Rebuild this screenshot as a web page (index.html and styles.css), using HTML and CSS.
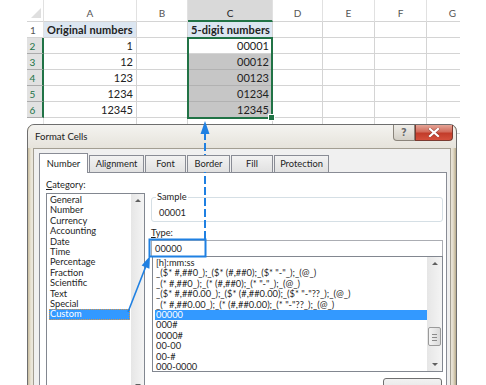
FILE: index.html
```html
<!DOCTYPE html>
<html lang="en">
<head>
    <meta charset="UTF-8">
    <title>Format Cells - leading zeros</title>
    <link rel="stylesheet" href="styles.css">
</head>
<body>
    <div class="page">
        <div class="sheet">
            <div class="hd corner"><span class="tri"></span></div>
            <div class="hd col">A</div>
            <div class="hd col">B</div>
            <div class="hd col on">C</div>
            <div class="hd col">D</div>
            <div class="hd col">E</div>
            <div class="hd col">F</div>
            <div class="hd col">G</div>

            <div class="hd rn">1</div>
            <div class="cell head">Original numbers</div>
            <div class="cell"></div>
            <div class="cell head">5-digit numbers</div>
            <div class="cell"></div><div class="cell"></div><div class="cell"></div><div class="cell"></div>

            <div class="hd rn on">2</div>
            <div class="cell num">1</div>
            <div class="cell"></div>
            <div class="cell num active">00001</div>
            <div class="cell"></div><div class="cell"></div><div class="cell"></div><div class="cell"></div>

            <div class="hd rn on">3</div>
            <div class="cell num">12</div>
            <div class="cell"></div>
            <div class="cell num picked">00012</div>
            <div class="cell"></div><div class="cell"></div><div class="cell"></div><div class="cell"></div>

            <div class="hd rn on">4</div>
            <div class="cell num">123</div>
            <div class="cell"></div>
            <div class="cell num picked">00123</div>
            <div class="cell"></div><div class="cell"></div><div class="cell"></div><div class="cell"></div>

            <div class="hd rn on">5</div>
            <div class="cell num">1234</div>
            <div class="cell"></div>
            <div class="cell num picked">01234</div>
            <div class="cell"></div><div class="cell"></div><div class="cell"></div><div class="cell"></div>

            <div class="hd rn on">6</div>
            <div class="cell num">12345</div>
            <div class="cell"></div>
            <div class="cell num picked">12345</div>
            <div class="cell"></div><div class="cell"></div><div class="cell"></div><div class="cell"></div>

            <div class="hd rn"></div>
            <div class="cell"></div><div class="cell"></div><div class="cell"></div>
            <div class="cell"></div><div class="cell"></div><div class="cell"></div><div class="cell"></div>

            <div class="selection"><span class="handle"></span></div>
        </div>

        <div class="dialog">
            <div class="titlebar">
                <span class="title">Format Cells</span>
                <div class="caption-btns">
                    <span class="cbtn help">?</span>
                    <span class="cbtn close">
                        <svg width="12" height="9" viewBox="0 0 12 9"><path d="M2 1 L10 8 M10 1 L2 8" stroke="#6b2a22" stroke-width="3.4" stroke-linecap="square" opacity="0.45"/><path d="M2 1 L10 8 M10 1 L2 8" stroke="#fff" stroke-width="2.2" stroke-linecap="square"/></svg>
                    </span>
                </div>
            </div>
            <div class="client">
                <div class="tabs">
                    <span class="tab active">Number</span>
                    <span class="tab">Alignment</span>
                    <span class="tab">Font</span>
                    <span class="tab">Border</span>
                    <span class="tab">Fill</span>
                    <span class="tab">Protection</span>
                </div>
                <div class="panel">
                    <div class="left">
                        <div class="label"><u>C</u>ategory:</div>
                        <div class="listbox cats">
                            <ul>
                                <li>General</li>
                                <li>Number</li>
                                <li>Currency</li>
                                <li>Accounting</li>
                                <li>Date</li>
                                <li>Time</li>
                                <li>Percentage</li>
                                <li>Fraction</li>
                                <li>Scientific</li>
                                <li>Text</li>
                                <li>Special</li>
                                <li class="sel focus">Custom</li>
                            </ul>
                            <div class="vscroll">
                                <span class="arrow up"></span>
                                <span class="arrow down"></span>
                            </div>
                        </div>
                    </div>
                    <div class="right">
                        <fieldset class="sample">
                            <legend>Sample</legend>
                            <div class="sample-val">00001</div>
                        </fieldset>
                        <div class="label type-label"><u>T</u>ype:</div>
                        <div class="textbox">00000</div>
                        <div class="listbox formats">
                            <ul>
                                <li>[h]:mm:ss</li>
                                <li>_($* #,##0_);_($* (#,##0);_($* "-"_);_(@_)</li>
                                <li>_(* #,##0_);_(* (#,##0);_(* "-"_);_(@_)</li>
                                <li>_($* #,##0.00_);_($* (#,##0.00);_($* "-"??_);_(@_)</li>
                                <li>_(* #,##0.00_);_(* (#,##0.00);_(* "-"??_);_(@_)</li>
                                <li class="sel">00000</li>
                                <li>000#</li>
                                <li>0000#</li>
                                <li>00-00</li>
                                <li>00-#</li>
                                <li>000-0000</li>
                            </ul>
                            <div class="vscroll">
                                <span class="arrow up"></span>
                                <span class="thumb"></span>
                                <span class="arrow down"></span>
                            </div>
                        </div>
                        <div class="btn-row">
                            <span class="button">Delete</span>
                        </div>
                    </div>
                </div>
            </div>
        </div>

        <svg class="notes" width="486" height="385" viewBox="0 0 486 385">
            <rect x="149.5" y="239.5" width="56" height="17" fill="none" stroke="#1f80e2" stroke-width="2"/>
            <line x1="205" y1="239" x2="205" y2="133" stroke="#1f80e2" stroke-width="2" stroke-dasharray="8 3"/>
            <polygon points="205,121 200.5,134 209.5,134" fill="#1f80e2"/>
            <line x1="128" y1="312" x2="146" y2="266" stroke="#1f80e2" stroke-width="1.6"/>
            <polygon points="150,256 149.4,268.8 141.6,265.6" fill="#1f80e2"/>
        </svg>
    </div>
</body>
</html>
```

FILE: styles.css
```css
body {
    margin: 0;
    background: #fff;
    font-family: Lato, "Open Sans", sans-serif;
}
.page {
    position: relative;
    width: 486px;
    height: 385px;
    overflow: hidden;
}

/* spreadsheet */
.sheet {
    position: relative;
    margin-left: 27px;
    width: 433px;
    display: grid;
    grid-template-columns: 17px 93px 51px 85px 50px 52px 52px 52px;
    grid-template-rows: 22px repeat(7, 16px);
    font-family: Lato, "Liberation Sans", sans-serif;
    font-size: 11px;
    color: #222;
    overflow: hidden;
}
.hd {
    background: #fff;
    color: #555;
    font-size: 10px;
    display: flex;
    align-items: center;
    justify-content: center;
    box-sizing: border-box;
    border-right: 1px solid #e1e1e1;
    border-bottom: 1px solid #d4d4d4;
}
.hd.col {
    padding-top: 5px;
}
.hd.rn {
    padding-right: 4px;
}
.hd.col.on {
    background: #d9d9d9;
    border-bottom: 2px solid #217346;
    color: #222;
}
.hd.rn.on {
    background: #e1e1e1;
    color: #217346;
    border-right: 2px solid #217346;
    border-bottom-color: #ababab;
}
.corner {
    position: relative;
    align-items: flex-end;
    justify-content: flex-end;
}
.tri {
    width: 0;
    height: 0;
    margin: 0 2px 3px 0;
    border-left: 10px solid transparent;
    border-bottom: 10px solid #dfdfdf;
}
.cell {
    box-sizing: border-box;
    border-right: 1px solid #d4d4d4;
    border-bottom: 1px solid #d4d4d4;
    padding: 0 3px;
    line-height: 15px;
    white-space: nowrap;
    overflow: hidden;
}
.cell.head {
    background: #dce6f1;
    font-weight: bold;
    padding-left: 3px;
    letter-spacing: 0.1px;
}
.cell.num {
    text-align: right;
}
.cell.picked {
    background: #c6c6c6;
    border-bottom-color: #b2b2b2;
}
.selection {
    position: absolute;
    left: 160px;
    top: 37px;
    width: 86px;
    height: 82px;
    box-sizing: border-box;
    border: 2px solid #217346;
}
.handle {
    position: absolute;
    right: -4px;
    bottom: -4px;
    width: 5px;
    height: 5px;
    background: #217346;
    border: 1px solid #fff;
}

/* dialog */
.dialog {
    position: absolute;
    left: 27px;
    top: 124px;
    width: 430px;
    height: 290px;
    box-sizing: border-box;
    border: 1px solid #6e6e6e;
    border-radius: 7px 7px 0 0;
    background: linear-gradient(to right, #c9bd9f 0, #e9e4d6 3px, #ebe8e0 6px, #ebe8e0 calc(100% - 6px), #e3dccb calc(100% - 3px), #b9ac8c 100%);
    font-size: 9.3px;
    color: #1e1e1e;
    padding: 0 5px;
}
.titlebar {
    position: relative;
    height: 23px;
    display: flex;
    align-items: center;
    background: linear-gradient(#f4f3f0, #e6e3db);
    margin: 0 -5px;
    padding: 0 7px;
    border-radius: 7px 7px 0 0;
}
.title {
    font-size: 9.6px;
    color: #1b1b1b;
}
.caption-btns {
    position: absolute;
    right: 3px;
    top: 0;
    display: flex;
}
.cbtn {
    height: 16px;
    box-sizing: border-box;
    display: flex;
    align-items: center;
    justify-content: center;
    border: 1px solid #8a847b;
    border-top: none;
}
.cbtn.help {
    width: 22px;
    background: linear-gradient(#efede8, #d3cfc6);
    border-radius: 0 0 0 4px;
    color: #6a6a6a;
    font-family: "DejaVu Sans", sans-serif;
    font-weight: bold;
    font-size: 10px;
    text-shadow: 0 0 1px #fff;
}
.cbtn.close {
    width: 38px;
    border-left: 1px solid #6b3a30;
    border-color: #7a3a30;
    background: linear-gradient(#e4a496, #d26c5c 45%, #c23c2a 55%, #d4503c);
    border-radius: 0 0 4px 0;
}
.client {
    height: 260px;
    background: #f0f0f0;
    border: 1px solid #a39e92;
    padding: 4px 5px 0;
}
.tabs {
    display: flex;
    align-items: flex-end;
    height: 19px;
    position: relative;
    z-index: 1;
}
.tab {
    height: 17px;
    box-sizing: border-box;
    padding: 0;
    margin-right: 1px;
    border: 1px solid #898c95;
    border-bottom: none;
    background: linear-gradient(#f2f2f2, #e1e1e1);
    display: flex;
    align-items: center;
    justify-content: center;
    line-height: 1;
}
.tab.active {
    height: 20px;
    margin-bottom: -1px;
    background: #fff;
    width: 49px;
}
.tab:nth-child(2) { width: 55px; }
.tab:nth-child(3) { width: 41px; }
.tab:nth-child(4) { width: 43px; }
.tab:nth-child(5) { width: 42px; }
.tab:nth-child(6) { width: 55px; }
.panel {
    background: #fff;
    border: 1px solid #898c95;
    height: 240px;
    width: 408px;
    box-sizing: border-box;
    display: flex;
    gap: 6px;
    padding: 6px 0 0 6px;
}
.left {
    width: 99px;
}
.label {
    height: 14px;
    line-height: 12px;
}
.label u {
    text-decoration-thickness: 1px;
    text-underline-offset: 1px;
}
.listbox {
    position: relative;
    border: 1px solid #828790;
    background: #fff;
    box-sizing: border-box;
}
.listbox ul {
    list-style: none;
    margin: 0;
    padding: 1px 0 0 2px;
}
.listbox li {
    height: 10.4px;
    line-height: 10.4px;
    padding-left: 1px;
    white-space: nowrap;
    overflow: hidden;
}
.listbox li.sel {
    background: #3399ff;
    color: #fff;
}
.listbox li.focus {
    outline: 1px dotted #d9964a;
    outline-offset: -1px;
}
.cats {
    height: 200px;
}
.cats ul {
    margin-right: 14px;
}
.vscroll {
    position: absolute;
    right: 0;
    top: 0;
    bottom: 0;
    width: 13px;
    background: linear-gradient(to right, #e6e6e6, #f4f4f4);
}
.arrow {
    position: absolute;
    left: 4px;
    width: 0;
    height: 0;
    border-left: 3px solid transparent;
    border-right: 3px solid transparent;
}
.arrow.up {
    top: 5px;
    border-bottom: 3px solid #606060;
}
.arrow.down {
    bottom: 5px;
    border-top: 3px solid #606060;
}
.thumb {
    position: absolute;
    left: 1px;
    right: 1px;
    top: 70px;
    height: 19px;
    box-sizing: border-box;
    border: 1px solid #9a9a9a;
    border-radius: 2px;
    background: linear-gradient(to right, #f3f3f3, #dadada);
}
.thumb::after {
    content: "";
    position: absolute;
    left: 3px;
    right: 3px;
    top: 6px;
    height: 5px;
    border-top: 1px solid #8a8a8a;
    border-bottom: 1px solid #8a8a8a;
    background: linear-gradient(#8a8a8a, #8a8a8a) no-repeat 0 2px / 100% 1px;
}
.right {
    width: 292px;
    padding-top: 13px;
}
.sample {
    margin: 0;
    padding: 5px 6px 2px;
    border: 1px solid #d5dfe5;
    border-radius: 3px;
}
.sample legend {
    padding: 0 1px;
    margin-left: -2px;
    line-height: 10px;
}
.sample-val {
    padding-left: 1px;
    line-height: 12px;
}
.type-label {
    margin-top: 5px;
    height: 13px;
}
.textbox {
    height: 17px;
    box-sizing: border-box;
    border: 1px solid #abadb3;
    padding: 0 3px;
    line-height: 15px;
}
.formats {
    height: 116px;
    margin-top: -1px;
    margin-left: 1px;
}
.formats ul {
    margin-right: 15px;
    padding-top: 1px;
}
.formats .vscroll {
    width: 15px;
}
.formats .arrow {
    left: 5px;
}
.btn-row {
    display: flex;
    justify-content: flex-end;
    margin-top: 6px;
    padding-right: 1px;
}
.button {
    width: 59px;
    height: 22px;
    box-sizing: border-box;
    border: 1px solid #707070;
    border-radius: 3px;
    background: linear-gradient(#f2f2f2, #dcdcdc);
    text-align: center;
    line-height: 20px;
}

/* annotation arrows */
.notes {
    position: absolute;
    left: 0;
    top: 0;
    pointer-events: none;
}
```
